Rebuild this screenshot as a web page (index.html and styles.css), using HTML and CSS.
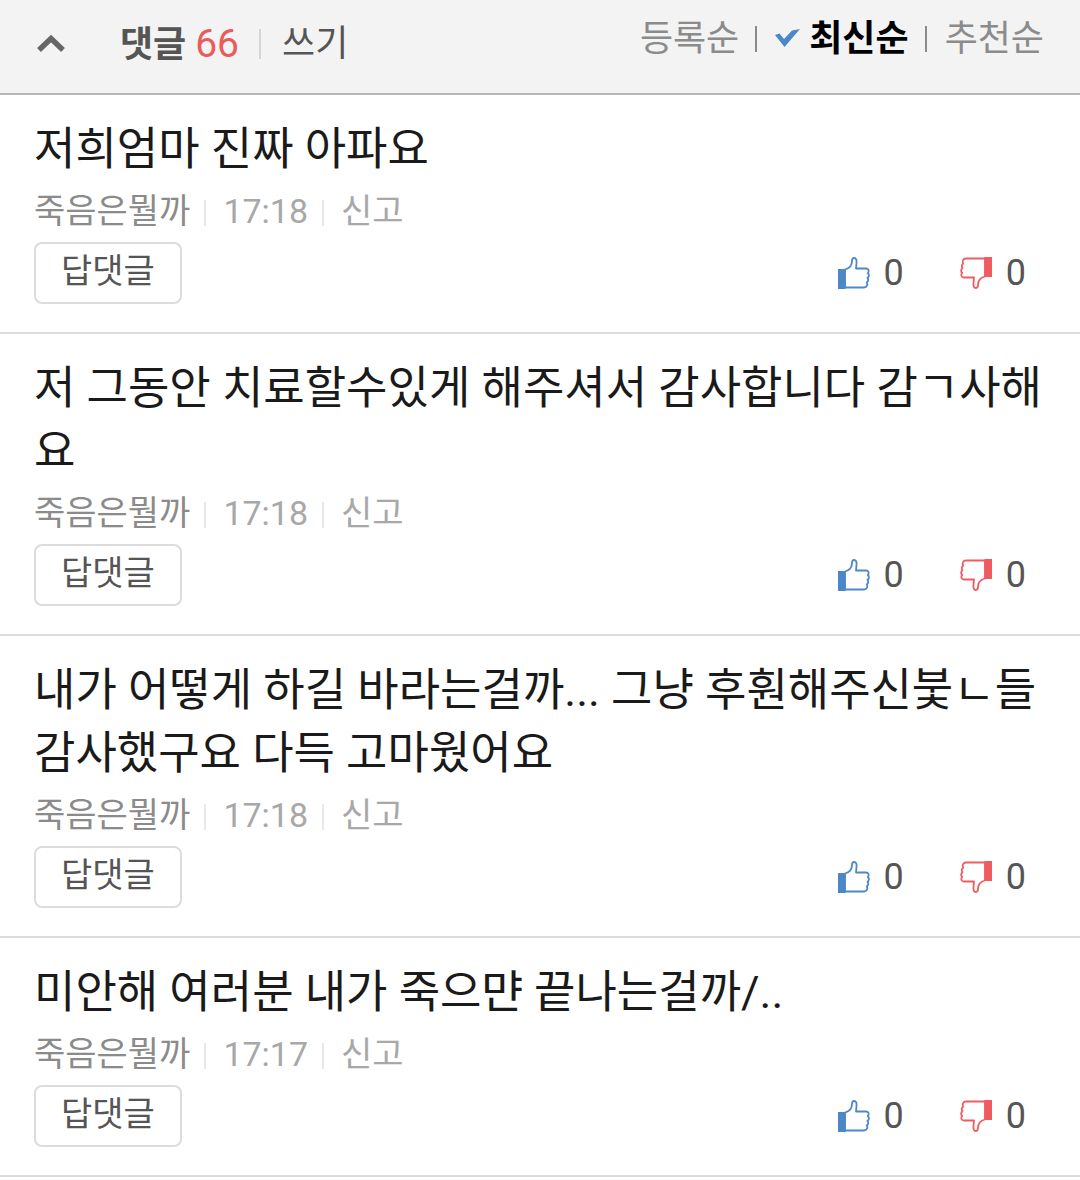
FILE: index.html
```html
<!DOCTYPE html>
<html lang="ko">
<head>
    <meta charset="UTF-8">
    <meta name="viewport" content="width=device-width, initial-scale=1.0">
    <title>댓글</title>
    <link rel="stylesheet" href="styles.css">
</head>
<body>
    <!-- icons -->
    <svg class="sprite" width="0" height="0" aria-hidden="true">
        <symbol id="thumb-up" viewBox="0 0 32 32">
            <path d="M7 12.500C11 11.500 14 8.500 14 4C14 2 14.700 1 16 1C18.200 1 18.800 3 18.500 6L18 11.500H28C30.500 11.500 31.500 14 29.800 16C31.500 17.500 31 19.800 29.500 20.800C30.800 22.300 30.300 24.500 28.800 25.300C30 27.500 29 30.500 26 30.500H7Z" fill="#fff" stroke="currentColor" stroke-width="1.800" stroke-linejoin="round"/>
            <path d="M0 12H7.500V32H0Z" fill="currentColor"/>
        </symbol>
    </svg>

    <header class="comment-header">
        <div class="header-left">
            <button class="fold" type="button" aria-label="접기">
                <svg width="30" height="20" viewBox="0 0 30 20"><path d="M3 16L15 4.500L27 16" fill="none" stroke="#666" stroke-width="5.500"/></svg>
            </button>
            <h1 class="title">댓글 <span class="count">66</span></h1>
            <a class="write" href="#">쓰기</a>
        </div>
        <nav class="sort">
            <a href="#">등록순</a>
            <a class="active" href="#"><svg width="26" height="22" viewBox="0 0 26 22"><path d="M0 7L4.500 5.500L9 11L17 2.500L25 1L9.500 19Z" fill="#4c87c7"/></svg>최신순</a>
            <a href="#">추천순</a>
        </nav>
    </header>

    <ul class="comment-list">
        <li class="comment">
            <p class="text">저희엄마 진짜 아파요</p>
            <div class="meta">
                <span class="author">죽음은뭘까</span>
                <span class="time">17:18</span>
                <a class="report" href="#">신고</a>
            </div>
            <div class="actions">
                <button class="reply" type="button">답댓글</button>
                <div class="votes">
                    <button class="vote up" type="button" aria-label="추천"><svg class="thumb"><use href="#thumb-up"/></svg>0</button>
                    <button class="vote down" type="button" aria-label="반대"><svg class="thumb"><use href="#thumb-up"/></svg>0</button>
                </div>
            </div>
        </li>
        <li class="comment">
            <p class="text">저 그동안 치료할수있게 해주셔서 감사합니다 감ㄱ사해요</p>
            <div class="meta">
                <span class="author">죽음은뭘까</span>
                <span class="time">17:18</span>
                <a class="report" href="#">신고</a>
            </div>
            <div class="actions">
                <button class="reply" type="button">답댓글</button>
                <div class="votes">
                    <button class="vote up" type="button" aria-label="추천"><svg class="thumb"><use href="#thumb-up"/></svg>0</button>
                    <button class="vote down" type="button" aria-label="반대"><svg class="thumb"><use href="#thumb-up"/></svg>0</button>
                </div>
            </div>
        </li>
        <li class="comment">
            <p class="text">내가 어떻게 하길 바라는걸까... 그냥 후훤해주신붗ㄴ들 감사했구요 다득 고마웠어요</p>
            <div class="meta">
                <span class="author">죽음은뭘까</span>
                <span class="time">17:18</span>
                <a class="report" href="#">신고</a>
            </div>
            <div class="actions">
                <button class="reply" type="button">답댓글</button>
                <div class="votes">
                    <button class="vote up" type="button" aria-label="추천"><svg class="thumb"><use href="#thumb-up"/></svg>0</button>
                    <button class="vote down" type="button" aria-label="반대"><svg class="thumb"><use href="#thumb-up"/></svg>0</button>
                </div>
            </div>
        </li>
        <li class="comment">
            <p class="text">미안해 여러분 내가 죽으먄 끝나는걸까/..</p>
            <div class="meta">
                <span class="author">죽음은뭘까</span>
                <span class="time">17:17</span>
                <a class="report" href="#">신고</a>
            </div>
            <div class="actions">
                <button class="reply" type="button">답댓글</button>
                <div class="votes">
                    <button class="vote up" type="button" aria-label="추천"><svg class="thumb"><use href="#thumb-up"/></svg>0</button>
                    <button class="vote down" type="button" aria-label="반대"><svg class="thumb"><use href="#thumb-up"/></svg>0</button>
                </div>
            </div>
        </li>
    </ul>
</body>
</html>
```
FILE: styles.css
```css
* {
    box-sizing: border-box;
}
body {
    margin: 0;
    background: #fff;
    color: #1a1a1a;
    font-family: Roboto, "Noto Sans CJK KR", sans-serif;
}
a {
    color: inherit;
    text-decoration: none;
}
button {
    background: none;
    border: none;
    padding: 0;
    font-family: inherit;
    cursor: pointer;
}
.sprite {
    display: block;
}

/* header */
.comment-header {
    display: flex;
    justify-content: space-between;
    align-items: flex-start;
    padding: 13px 36px 0;
    background: #f3f3f3;
    border-bottom: 2px solid #b8b8b8;
}
.header-left {
    display: flex;
    align-items: center;
    height: 80px;
    padding-bottom: 18px;
    color: #555;
    font-size: 36px;
    line-height: 52px;
}
.fold {
    display: flex;
    margin-right: 54px;
}
.title {
    margin: 0;
    font-size: 36px;
    font-weight: 700;
}
.count {
    color: #e85c5c;
    font-size: 39px;
    font-weight: 400;
}
.write {
    display: flex;
    align-items: center;
}
.write::before {
    content: "";
    width: 2px;
    height: 30px;
    margin: 0 21px 0 20px;
    background: #d5d5d5;
}
.sort {
    display: flex;
    color: #8b8b8b;
    font-size: 36px;
    line-height: 52px;
}
.sort a {
    display: flex;
    align-items: center;
}
.sort a + a::before {
    content: "";
    width: 2px;
    height: 26px;
    margin: 0 18px 0 16px;
    background: #8b8b8b;
}
.sort .active {
    color: #000;
    font-weight: 700;
}
.sort svg {
    margin-right: 8px;
}

/* comments */
.comment-list {
    margin: 0;
    padding: 0;
    list-style: none;
}
.comment {
    padding: 23px 34px 28px;
    border-bottom: 2px solid #dcdcdc;
}
.text {
    margin: 0;
    font-size: 45px;
    line-height: 63px;
}
.meta {
    display: flex;
    align-items: center;
    margin: 6px 0 7px;
    color: #a8a8a8;
    font-size: 34px;
    line-height: 48px;
}
.author {
    color: #8b8b8b;
}
.time,
.report {
    display: flex;
    align-items: center;
}
.time::before,
.report::before {
    content: "";
    width: 2px;
    height: 26px;
    margin: 4px 17px 0 14px;
    background: #e8e8e8;
}
.actions {
    display: flex;
    justify-content: space-between;
    align-items: center;
}
.reply {
    height: 62px;
    padding: 0 25px 4px;
    border: 2px solid #dcdcdc;
    border-radius: 8px;
    color: #555;
    font-size: 34px;
    line-height: 48px;
}
.votes {
    display: flex;
    gap: 56px;
    padding-right: 20px;
}
.vote {
    display: flex;
    align-items: center;
    gap: 14px;
    color: #555;
    font-size: 36px;
    line-height: 50px;
}
.thumb {
    width: 32px;
    height: 32px;
}
.up .thumb {
    color: #4c87c7;
}
.down .thumb {
    color: #f05b5f;
    transform: rotate(180deg);
}
```
